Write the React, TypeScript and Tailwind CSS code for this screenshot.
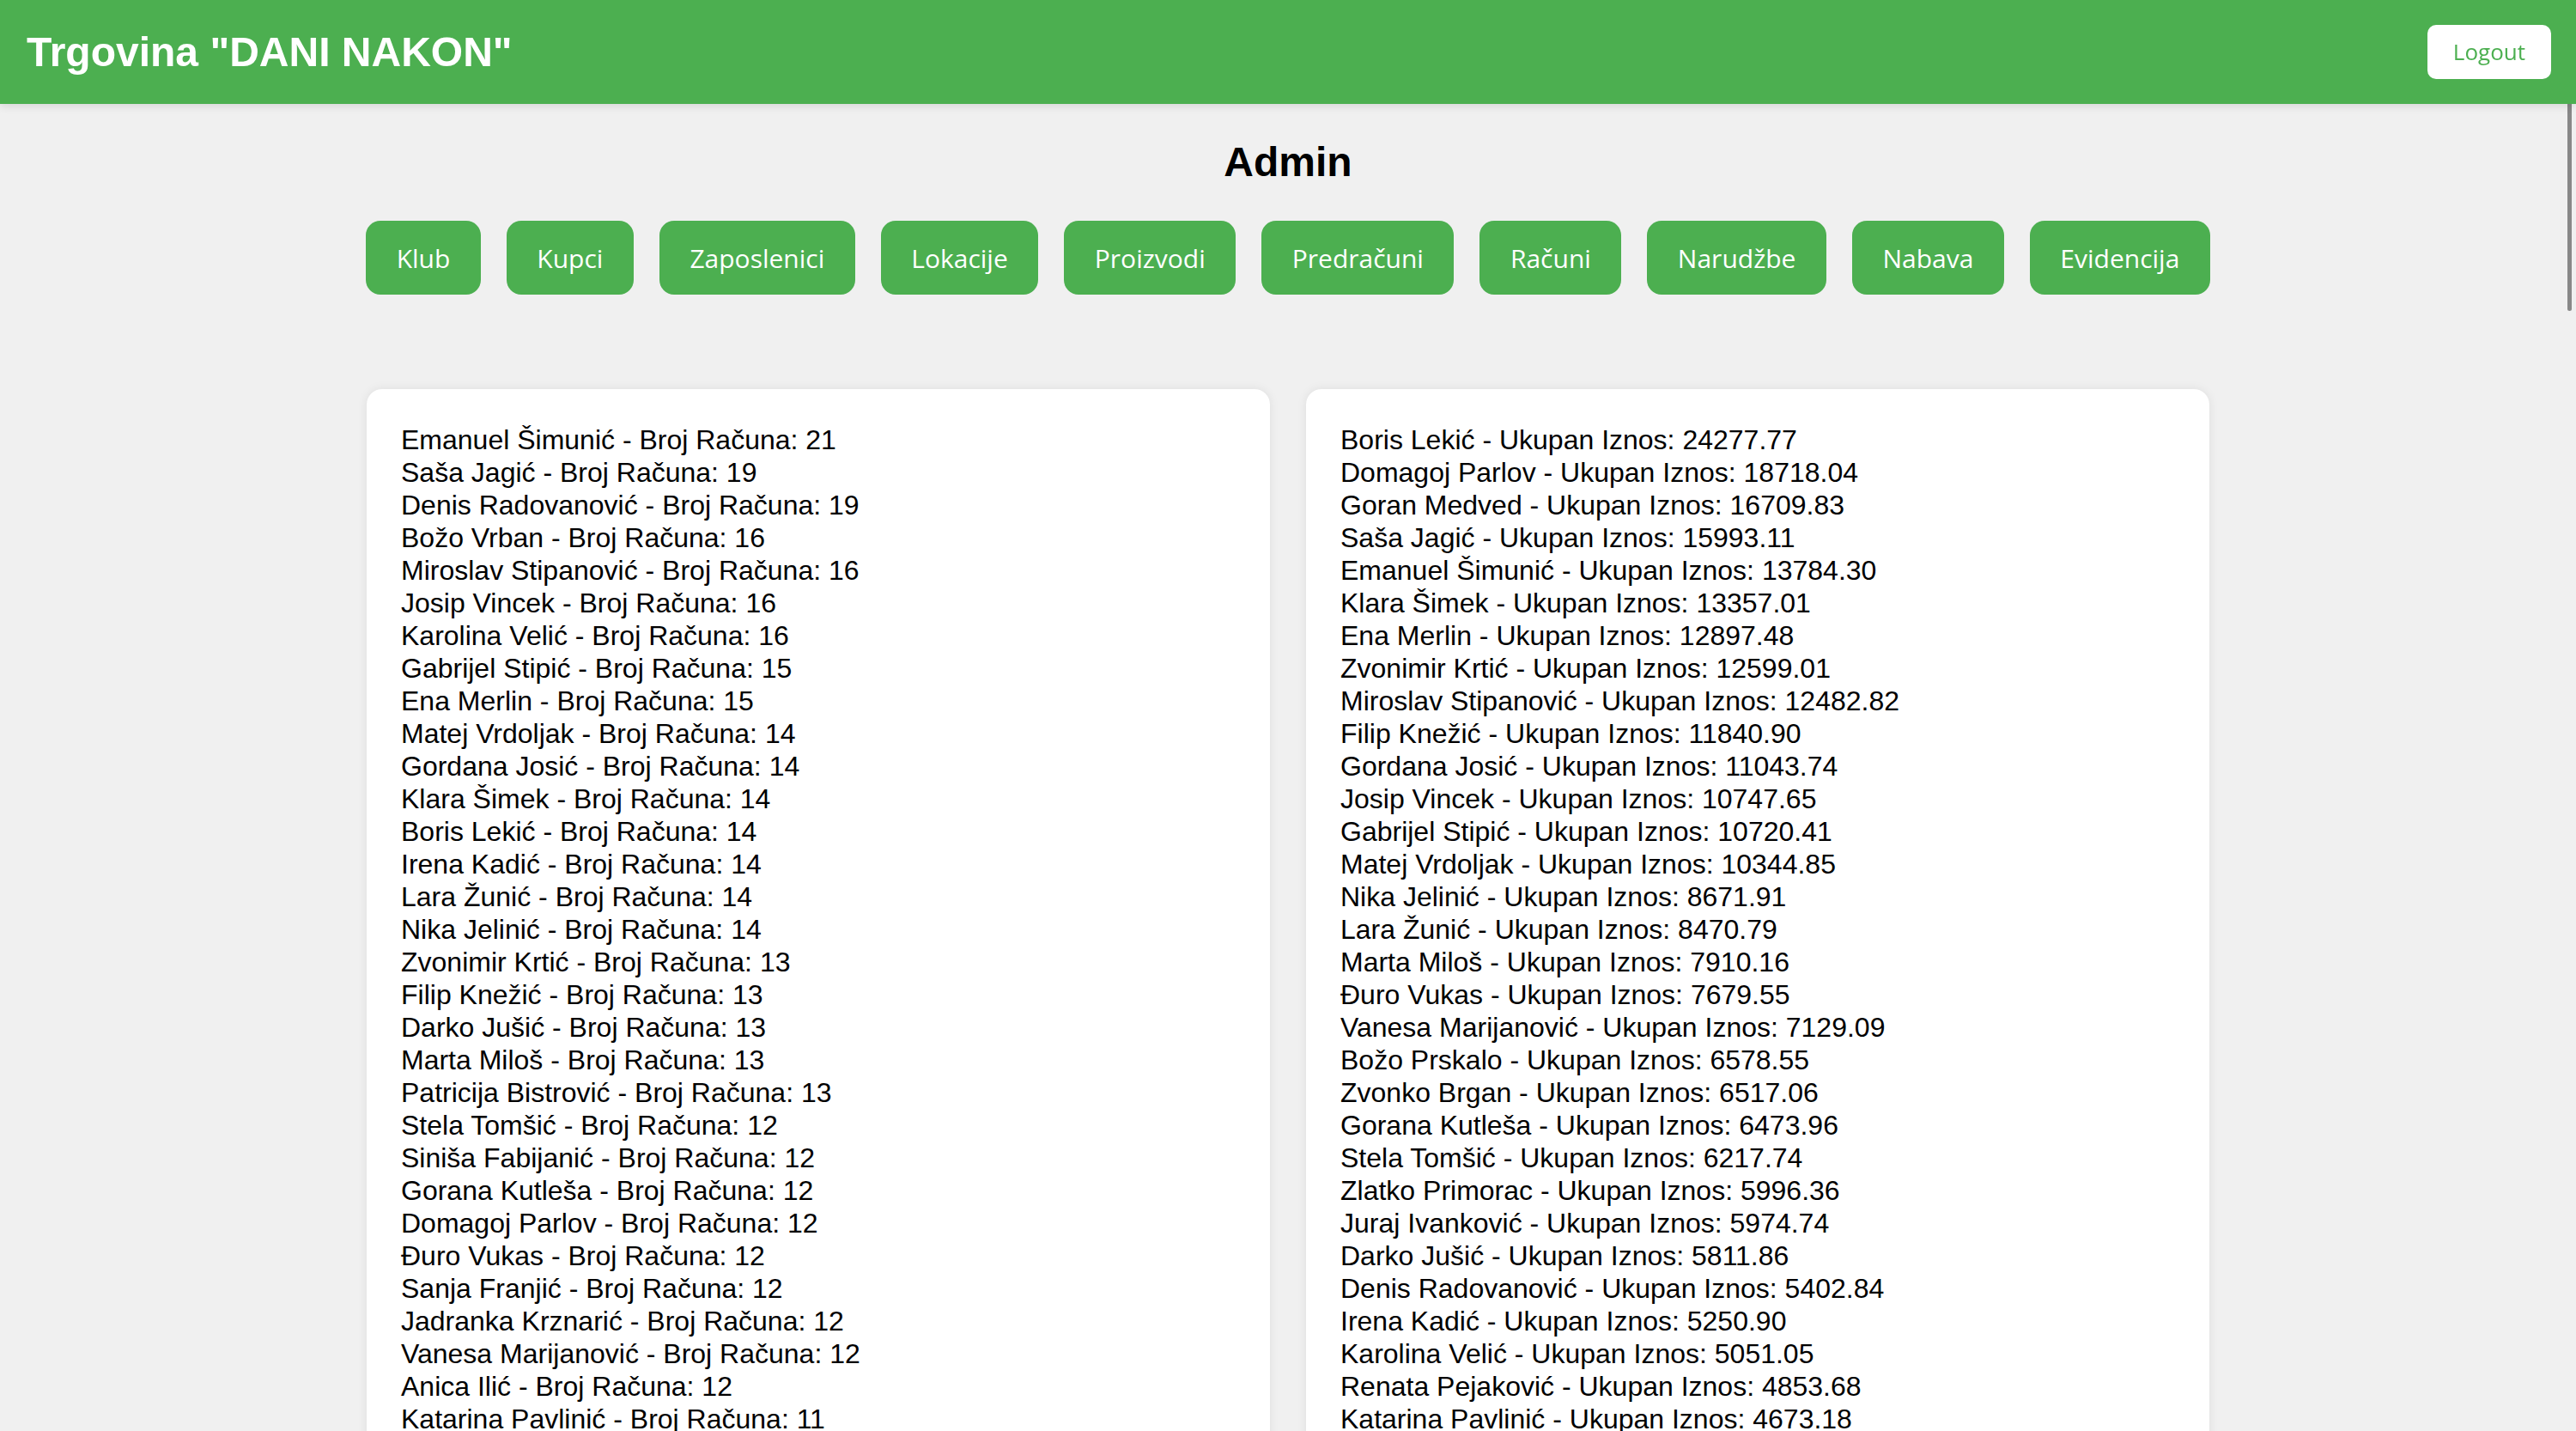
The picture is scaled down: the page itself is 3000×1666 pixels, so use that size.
import React from "react";

const navItems = [
  "Klub",
  "Kupci",
  "Zaposlenici",
  "Lokacije",
  "Proizvodi",
  "Predračuni",
  "Računi",
  "Narudžbe",
  "Nabava",
  "Evidencija",
];

const byCount: [string, number][] = [
  ["Emanuel Šimunić", 21],
  ["Saša Jagić", 19],
  ["Denis Radovanović", 19],
  ["Božo Vrban", 16],
  ["Miroslav Stipanović", 16],
  ["Josip Vincek", 16],
  ["Karolina Velić", 16],
  ["Gabrijel Stipić", 15],
  ["Ena Merlin", 15],
  ["Matej Vrdoljak", 14],
  ["Gordana Josić", 14],
  ["Klara Šimek", 14],
  ["Boris Lekić", 14],
  ["Irena Kadić", 14],
  ["Lara Žunić", 14],
  ["Nika Jelinić", 14],
  ["Zvonimir Krtić", 13],
  ["Filip Knežić", 13],
  ["Darko Jušić", 13],
  ["Marta Miloš", 13],
  ["Patricija Bistrović", 13],
  ["Stela Tomšić", 12],
  ["Siniša Fabijanić", 12],
  ["Gorana Kutleša", 12],
  ["Domagoj Parlov", 12],
  ["Đuro Vukas", 12],
  ["Sanja Franjić", 12],
  ["Jadranka Krznarić", 12],
  ["Vanesa Marijanović", 12],
  ["Anica Ilić", 12],
  ["Katarina Pavlinić", 11],
];

const byAmount: [string, string][] = [
  ["Boris Lekić", "24277.77"],
  ["Domagoj Parlov", "18718.04"],
  ["Goran Medved", "16709.83"],
  ["Saša Jagić", "15993.11"],
  ["Emanuel Šimunić", "13784.30"],
  ["Klara Šimek", "13357.01"],
  ["Ena Merlin", "12897.48"],
  ["Zvonimir Krtić", "12599.01"],
  ["Miroslav Stipanović", "12482.82"],
  ["Filip Knežić", "11840.90"],
  ["Gordana Josić", "11043.74"],
  ["Josip Vincek", "10747.65"],
  ["Gabrijel Stipić", "10720.41"],
  ["Matej Vrdoljak", "10344.85"],
  ["Nika Jelinić", "8671.91"],
  ["Lara Žunić", "8470.79"],
  ["Marta Miloš", "7910.16"],
  ["Đuro Vukas", "7679.55"],
  ["Vanesa Marijanović", "7129.09"],
  ["Božo Prskalo", "6578.55"],
  ["Zvonko Brgan", "6517.06"],
  ["Gorana Kutleša", "6473.96"],
  ["Stela Tomšić", "6217.74"],
  ["Zlatko Primorac", "5996.36"],
  ["Juraj Ivanković", "5974.74"],
  ["Darko Jušić", "5811.86"],
  ["Denis Radovanović", "5402.84"],
  ["Irena Kadić", "5250.90"],
  ["Karolina Velić", "5051.05"],
  ["Renata Pejaković", "4853.68"],
  ["Katarina Pavlinić", "4673.18"],
];

const arial = { fontFamily: '"Liberation Sans", Arial, sans-serif' };
const openSans = { fontFamily: '"Open Sans", "Noto Sans", sans-serif' };

export default function App() {
  return (
    <div className="h-[1666px] overflow-hidden bg-[#f0f0f0] text-black" style={arial}>
      <header className="h-[121px] bg-[#4caf50] flex items-center justify-between pl-[31px] pr-[29px] shadow-[0_2px_10px_rgba(0,0,0,0.12)] relative z-10">
        <h1 className="text-[48px] font-bold text-white leading-none">Trgovina "DANI NAKON"</h1>
        <button
          className="h-[63px] px-[30px] bg-white text-[#4caf50] rounded-[10px] text-[26px] flex items-center"
          style={openSans}
        >
          Logout
        </button>
      </header>

      <main className="flex flex-col items-center">
        <h2 className="mt-[40px] text-[48px] font-bold leading-[55px]">Admin</h2>

        <nav className="mt-[41px] flex gap-[30px]">
          {navItems.map((item) => (
            <button
              key={item}
              className="h-[86px] px-[35.5px] bg-[#4caf50] text-white rounded-[17px] text-[30px] flex items-center"
              style={openSans}
            >
              {item}
            </button>
          ))}
        </nav>

        <div className="mt-[110px] w-[2146px] grid grid-cols-2 gap-[42px]">
          <div className="bg-white rounded-[18px] shadow-[0_0_12px_rgba(0,0,0,0.08)] p-[40px]">
            <ul className="text-[32px] leading-[38px]">
              {byCount.map(([name, n], i) => (
                <li key={i} className="whitespace-nowrap">
                  {name} - Broj Računa: {n}
                </li>
              ))}
            </ul>
          </div>
          <div className="bg-white rounded-[18px] shadow-[0_0_12px_rgba(0,0,0,0.08)] p-[40px]">
            <ul className="text-[32px] leading-[38px]">
              {byAmount.map(([name, v], i) => (
                <li key={i} className="whitespace-nowrap">
                  {name} - Ukupan Iznos: {v}
                </li>
              ))}
            </ul>
          </div>
        </div>
      </main>

      {/* scrollbar thumb drawn over the page */}
      <div className="fixed right-[5px] top-[20px] w-[5px] h-[342px] rounded-full bg-[#888]" />
    </div>
  );
}
